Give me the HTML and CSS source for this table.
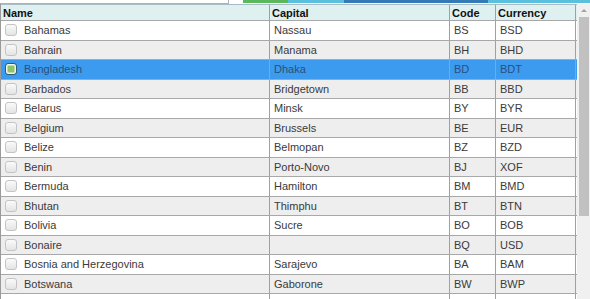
FILE: index.html
```html
<!DOCTYPE html>
<html>
<head>
<meta charset="utf-8">
<link rel="stylesheet" href="styles.css">
</head>
<body>
<div class="topbar">
  <div class="search"></div>
  <div class="gap"></div>
  <div class="seg green"></div>
  <div class="seg sky"></div>
  <div class="seg blue"></div>
  <div class="seg sky2"></div>
</div>
<div class="grid">
  <div class="table">
    <div class="row head">
      <div class="c name">Name</div>
      <div class="c cap">Capital</div>
      <div class="c code">Code</div>
      <div class="c cur">Currency</div>
    </div>
    <div class="row"><div class="c name"><span class="cb"></span>Bahamas</div><div class="c cap">Nassau</div><div class="c code">BS</div><div class="c cur">BSD</div></div>
    <div class="row alt"><div class="c name"><span class="cb"></span>Bahrain</div><div class="c cap">Manama</div><div class="c code">BH</div><div class="c cur">BHD</div></div>
    <div class="row sel"><div class="c name"><span class="cb on"></span>Bangladesh</div><div class="c cap">Dhaka</div><div class="c code">BD</div><div class="c cur">BDT</div></div>
    <div class="row alt"><div class="c name"><span class="cb"></span>Barbados</div><div class="c cap">Bridgetown</div><div class="c code">BB</div><div class="c cur">BBD</div></div>
    <div class="row"><div class="c name"><span class="cb"></span>Belarus</div><div class="c cap">Minsk</div><div class="c code">BY</div><div class="c cur">BYR</div></div>
    <div class="row alt"><div class="c name"><span class="cb"></span>Belgium</div><div class="c cap">Brussels</div><div class="c code">BE</div><div class="c cur">EUR</div></div>
    <div class="row"><div class="c name"><span class="cb"></span>Belize</div><div class="c cap">Belmopan</div><div class="c code">BZ</div><div class="c cur">BZD</div></div>
    <div class="row alt"><div class="c name"><span class="cb"></span>Benin</div><div class="c cap">Porto-Novo</div><div class="c code">BJ</div><div class="c cur">XOF</div></div>
    <div class="row"><div class="c name"><span class="cb"></span>Bermuda</div><div class="c cap">Hamilton</div><div class="c code">BM</div><div class="c cur">BMD</div></div>
    <div class="row alt"><div class="c name"><span class="cb"></span>Bhutan</div><div class="c cap">Thimphu</div><div class="c code">BT</div><div class="c cur">BTN</div></div>
    <div class="row"><div class="c name"><span class="cb"></span>Bolivia</div><div class="c cap">Sucre</div><div class="c code">BO</div><div class="c cur">BOB</div></div>
    <div class="row alt"><div class="c name"><span class="cb"></span>Bonaire</div><div class="c cap"></div><div class="c code">BQ</div><div class="c cur">USD</div></div>
    <div class="row"><div class="c name"><span class="cb"></span>Bosnia and Herzegovina</div><div class="c cap">Sarajevo</div><div class="c code">BA</div><div class="c cur">BAM</div></div>
    <div class="row alt"><div class="c name"><span class="cb"></span>Botswana</div><div class="c cap">Gaborone</div><div class="c code">BW</div><div class="c cur">BWP</div></div>
    <div class="row"><div class="c name"></div><div class="c cap"></div><div class="c code"></div><div class="c cur"></div></div>
  </div>
  <div class="scrollbar">
    <div class="arrow"></div>
    <div class="thumb"></div>
  </div>
</div>
</body>
</html>
```
FILE: styles.css
```css
html, body {
  margin: 0;
  padding: 0;
  background: #fff;
}
body {
  width: 590px;
  height: 299px;
  overflow: hidden;
  font-family: Arial, "Liberation Sans", sans-serif;
  font-size: 11px;
  color: #3a3a3a;
}
.topbar {
  display: flex;
  height: 4px;
}
.search {
  width: 228px;
  height: 3px;
  border-right: 1px solid #a9b4c0;
  border-bottom: 1px solid #a9b4c0;
  background: #fff;
}
.gap { width: 14px; }
.seg { height: 3px; }
.green { width: 45px; background: #5cb85c; }
.sky { width: 56px; background: #5bc0de; }
.blue { width: 144px; background: #337ab7; }
.sky2 { flex: 1; background: #5bc0de; }
.grid {
  display: flex;
  height: 295px;
}
.table {
  width: 576px;
  border-left: 1px solid #9a9a9a;
  overflow: hidden;
}
.row {
  display: flex;
  height: 18.5px;
  border-bottom: 1px solid #a8a8a8;
  background: #fff;
}
.row.alt { background: #eeeeee; }
.row.sel { background: #3d9bef; color: #27507e; }
.row.head {
  height: 15px;
  border-top: 1px solid #a9bcc4;
  background: #dff0f1;
  font-weight: bold;
  color: #111;
}
.c {
  border-right: 1px solid #a0a0a0;
  padding-left: 4px;
  white-space: nowrap;
  overflow: hidden;
  display: flex;
  align-items: center;
}
.name { width: 264px; }
.cap { width: 175px; }
.code { width: 41px; }
.cur { width: 75px; }
.head .c { padding-left: 2px; }
.head .name { width: 266px; }
.head .cap { width: 177px; }
.head .code { width: 43px; }
.head .cur { width: 77px; }
.cb {
  width: 10px;
  height: 10px;
  border: 1px solid #c4c4c4;
  border-radius: 3px;
  background: linear-gradient(#fafafa, #e4e4e4);
  margin-right: 7px;
  flex: none;
}
.cb.on {
  border-color: #2e5b7d;
  background: #8cc565;
  box-shadow: inset 0 0 0 1.5px #f4f4f4;
}
.scrollbar {
  width: 13px;
  background: #f0f0f0;
  display: flex;
  flex-direction: column;
  align-items: center;
}
.arrow {
  margin-top: 5px;
  width: 0;
  height: 0;
  border-left: 3px solid transparent;
  border-right: 3px solid transparent;
  border-bottom: 3px solid #a3a3a3;
}
.thumb {
  margin-top: 5px;
  width: 10px;
  height: 199px;
  background: #c1c1c1;
}
```
